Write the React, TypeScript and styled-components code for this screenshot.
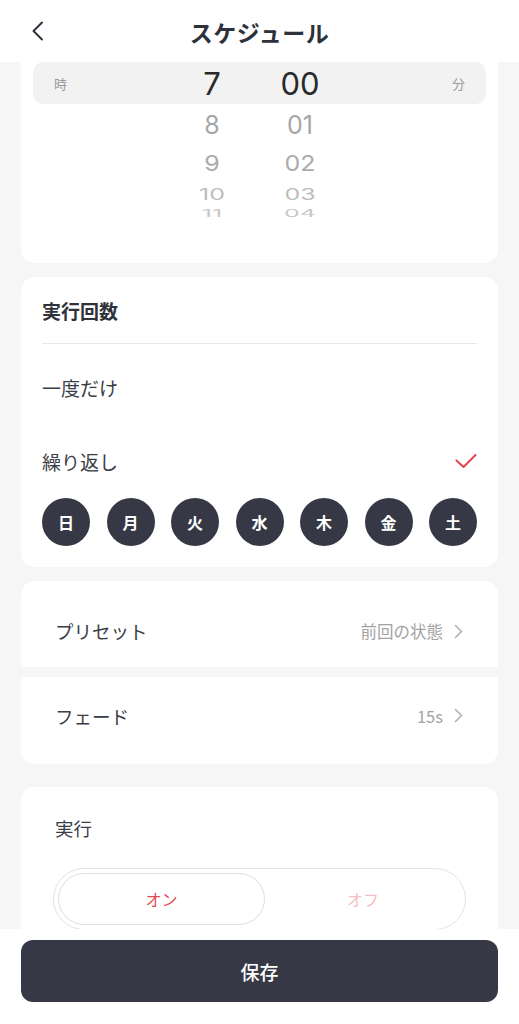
import React from 'react';
import styled, { createGlobalStyle } from 'styled-components';

const GlobalStyle = createGlobalStyle`
  html, body {
    margin: 0;
    padding: 0;
    background: #f6f6f6;
  }
  body {
    font-family: "Noto Sans CJK JP", "Noto Sans", sans-serif;
    color: #33363f;
  }
  * { box-sizing: border-box; }
`;

const Screen = styled.div`
  width: 519px;
  height: 1024px;
  display: flex;
  flex-direction: column;
  background: #f6f6f6;
  overflow: hidden;
`;

const Header = styled.header`
  height: 62px;
  flex: none;
  background: #fff;
  display: grid;
  grid-template-columns: 62px 1fr 62px;
  align-items: center;
`;

const BackButton = styled.button`
  border: none;
  background: none;
  padding: 0 0 0 31px;
  height: 100%;
  display: flex;
  align-items: center;
`;

const Title = styled.h1`
  margin: 0;
  text-align: center;
  font-size: 23px;
  font-weight: 700;
  color: #2d313a;
  letter-spacing: 0.5px;
  padding-top: 2px;
`;

const Content = styled.main`
  flex: 1;
  overflow: hidden;
  padding: 0 21px;
  display: flex;
  flex-direction: column;
`;

const Card = styled.section<{ $gap?: number; $flatTop?: boolean }>`
  background: #fff;
  border-radius: ${p => (p.$flatTop ? '0 0 14px 14px' : '14px')};
  margin-top: ${p => p.$gap ?? 14}px;
  flex: none;
`;

/* time picker */
const Picker = styled.div`
  height: 201px;
  padding: 0 12px;
`;

const Wheel = styled.div`
  height: 156px;
  overflow: hidden;
  display: flex;
  flex-direction: column;
`;

const WheelRow = styled.div<{ $h: number; $band?: boolean; $top?: boolean }>`
  flex: none;
  height: ${p => p.$h}px;
  display: grid;
  grid-template-columns: 135px 88px 88px 1fr;
  align-items: ${p => (p.$top ? 'start' : 'center')};
  background: ${p => (p.$band ? '#f2f2f2' : 'transparent')};
  border-radius: ${p => (p.$band ? '10px' : '0')};
  overflow: hidden;
`;

const Unit = styled.span<{ $right?: boolean }>`
  font-size: 13px;
  color: #9a9a9a;
  padding: 0 21px;
  text-align: ${p => (p.$right ? 'right' : 'left')};
`;

const Digit = styled.span<{ $size: number; $color: string; $scale: number }>`
  font-family: Inter, "Liberation Sans", sans-serif;
  font-size: ${p => p.$size}px;
  font-weight: 400;
  color: ${p => p.$color};
  text-align: center;
  line-height: 1;
  transform: scaleY(${p => p.$scale});
  transform-origin: center top;
`;

/* repeat card */
const RepeatCard = styled.div`
  padding: 0 21px 21px;
`;

const CardTitle = styled.div`
  height: 67px;
  display: flex;
  align-items: center;
  font-size: 19px;
  font-weight: 700;
  color: #2f323b;
  border-bottom: 1px solid #e8e8e8;
  margin-bottom: 6px;
`;

const OptionRow = styled.div`
  height: 74px;
  display: flex;
  align-items: center;
  justify-content: space-between;
  font-size: 19px;
  color: #3a3d45;
`;

const Days = styled.div`
  display: flex;
  justify-content: space-between;
`;

const Day = styled.div`
  width: 48px;
  height: 48px;
  border-radius: 50%;
  background: #363945;
  color: #fff;
  font-size: 16px;
  font-weight: 700;
  display: flex;
  align-items: center;
  justify-content: center;
`;

/* settings rows */
const SettingsGroup = styled.div`
  margin-top: 14px;
  display: flex;
  flex-direction: column;
  gap: 10px;
`;

const SettingRow = styled.div<{ $pos: 'top' | 'bottom' }>`
  background: #fff;
  height: ${p => (p.$pos === 'top' ? 86 : 87)}px;
  padding: ${p => (p.$pos === 'top' ? '14px 35px 0 34px' : '0 35px 10px 34px')};
  border-radius: ${p => (p.$pos === 'top' ? '14px 14px 0 0' : '0 0 14px 14px')};
  display: flex;
  align-items: center;
  justify-content: space-between;
  font-size: 18.5px;
  color: #3a3d45;
`;

const Value = styled.span`
  display: flex;
  align-items: center;
  gap: 11px;
  font-size: 16.5px;
  color: #a3a3a3;
`;

/* run card */
const RunCard = styled.div`
  padding: 22px 32px 0 32px;
  height: 200px;
`;

const RunLabel = styled.div`
  font-size: 18.5px;
  color: #3a3d45;
  padding-left: 2px;
  height: 38px;
  display: flex;
  align-items: center;
`;

const Segment = styled.div`
  margin-top: 21px;
  height: 62px;
  border: 1px solid #e2e2e2;
  border-radius: 31px;
  padding: 4px;
  display: grid;
  grid-template-columns: 207px 1fr;
`;

const SegmentOption = styled.div<{ $active?: boolean }>`
  border-radius: 27px;
  border: ${p => (p.$active ? '1.5px solid #dedede' : '1.5px solid transparent')};
  background: #fff;
  display: flex;
  align-items: center;
  justify-content: center;
  font-size: 16px;
  color: ${p => (p.$active ? '#e5484d' : '#f5bfc1')};
`;

const Footer = styled.footer`
  flex: none;
  height: 95px;
  background: #fff;
  padding: 11px 21px 0;
`;

const SaveButton = styled.button`
  width: 100%;
  height: 62px;
  border: none;
  border-radius: 12px;
  background: #363945;
  color: #fff;
  font-family: "Noto Sans CJK JP", sans-serif;
  font-size: 19px;
  font-weight: 500;
`;

const Chevron = ({ color = '#b0b0b0' }: { color?: string }) => (
  <svg width="9" height="15" viewBox="0 0 9 15" fill="none">
    <path d="M1.5 1.5L7.5 7.5L1.5 13.5" stroke={color} strokeWidth="1.6" strokeLinecap="round" strokeLinejoin="round" />
  </svg>
);

const wheelRows = [
  { h: 42, hour: '7', min: '00', size: 31, color: '#2a2a2a', scale: 1, band: true },
  { h: 42, hour: '8', min: '01', size: 25, color: '#a6a6a6', scale: 1 },
  { h: 34, hour: '9', min: '02', size: 25, color: '#ababab', scale: 0.88 },
  { h: 28, hour: '10', min: '03', size: 25, color: '#bdbdbd', scale: 0.62 },
  { h: 10, hour: '11', min: '04', size: 25, color: '#c8c8c8', scale: 0.42, top: true },
];

const days = ['日', '月', '火', '水', '木', '金', '土'];

export default function App() {
  return (
    <Screen>
      <GlobalStyle />
      <Header>
        <BackButton aria-label="back">
          <svg width="14" height="20" viewBox="0 0 14 20" fill="none">
            <path d="M11 1.5L2.5 10L11 18.5" stroke="#2d313a" strokeWidth="2" strokeLinecap="round" strokeLinejoin="round" />
          </svg>
        </BackButton>
        <Title>スケジュール</Title>
        <span />
      </Header>

      <Content>
        <Card $gap={0} $flatTop>
          <Picker>
            <Wheel>
              {wheelRows.map(r => (
                <WheelRow key={r.hour} $h={r.h} $band={r.band} $top={r.top}>
                  <Unit>{r.band ? '時' : ''}</Unit>
                  <Digit
                    $size={r.size}
                    $color={r.color}
                    $scale={r.scale}
                    style={r.top ? undefined : { transformOrigin: 'center' }}
                  >
                    {r.hour}
                  </Digit>
                  <Digit
                    $size={r.size}
                    $color={r.color}
                    $scale={r.scale}
                    style={r.top ? undefined : { transformOrigin: 'center' }}
                  >
                    {r.min}
                  </Digit>
                  <Unit $right>{r.band ? '分' : ''}</Unit>
                </WheelRow>
              ))}
            </Wheel>
          </Picker>
        </Card>

        <Card>
          <RepeatCard>
            <CardTitle>実行回数</CardTitle>
            <OptionRow>一度だけ</OptionRow>
            <OptionRow>
              繰り返し
              <svg width="22" height="16" viewBox="0 0 22 16" fill="none">
                <path d="M1.5 7.5L8.5 14L20.5 2" stroke="#e5414a" strokeWidth="2" strokeLinecap="round" strokeLinejoin="round" />
              </svg>
            </OptionRow>
            <Days>
              {days.map(d => (
                <Day key={d}>{d}</Day>
              ))}
            </Days>
          </RepeatCard>
        </Card>

        <SettingsGroup>
          <SettingRow $pos="top">
            プリセット
            <Value>
              前回の状態
              <Chevron />
            </Value>
          </SettingRow>
          <SettingRow $pos="bottom">
            フェード
            <Value>
              15s
              <Chevron />
            </Value>
          </SettingRow>
        </SettingsGroup>

        <Card $gap={23}>
          <RunCard>
            <RunLabel>実行</RunLabel>
            <Segment>
              <SegmentOption $active>オン</SegmentOption>
              <SegmentOption>オフ</SegmentOption>
            </Segment>
          </RunCard>
        </Card>
      </Content>

      <Footer>
        <SaveButton>保存</SaveButton>
      </Footer>
    </Screen>
  );
}
